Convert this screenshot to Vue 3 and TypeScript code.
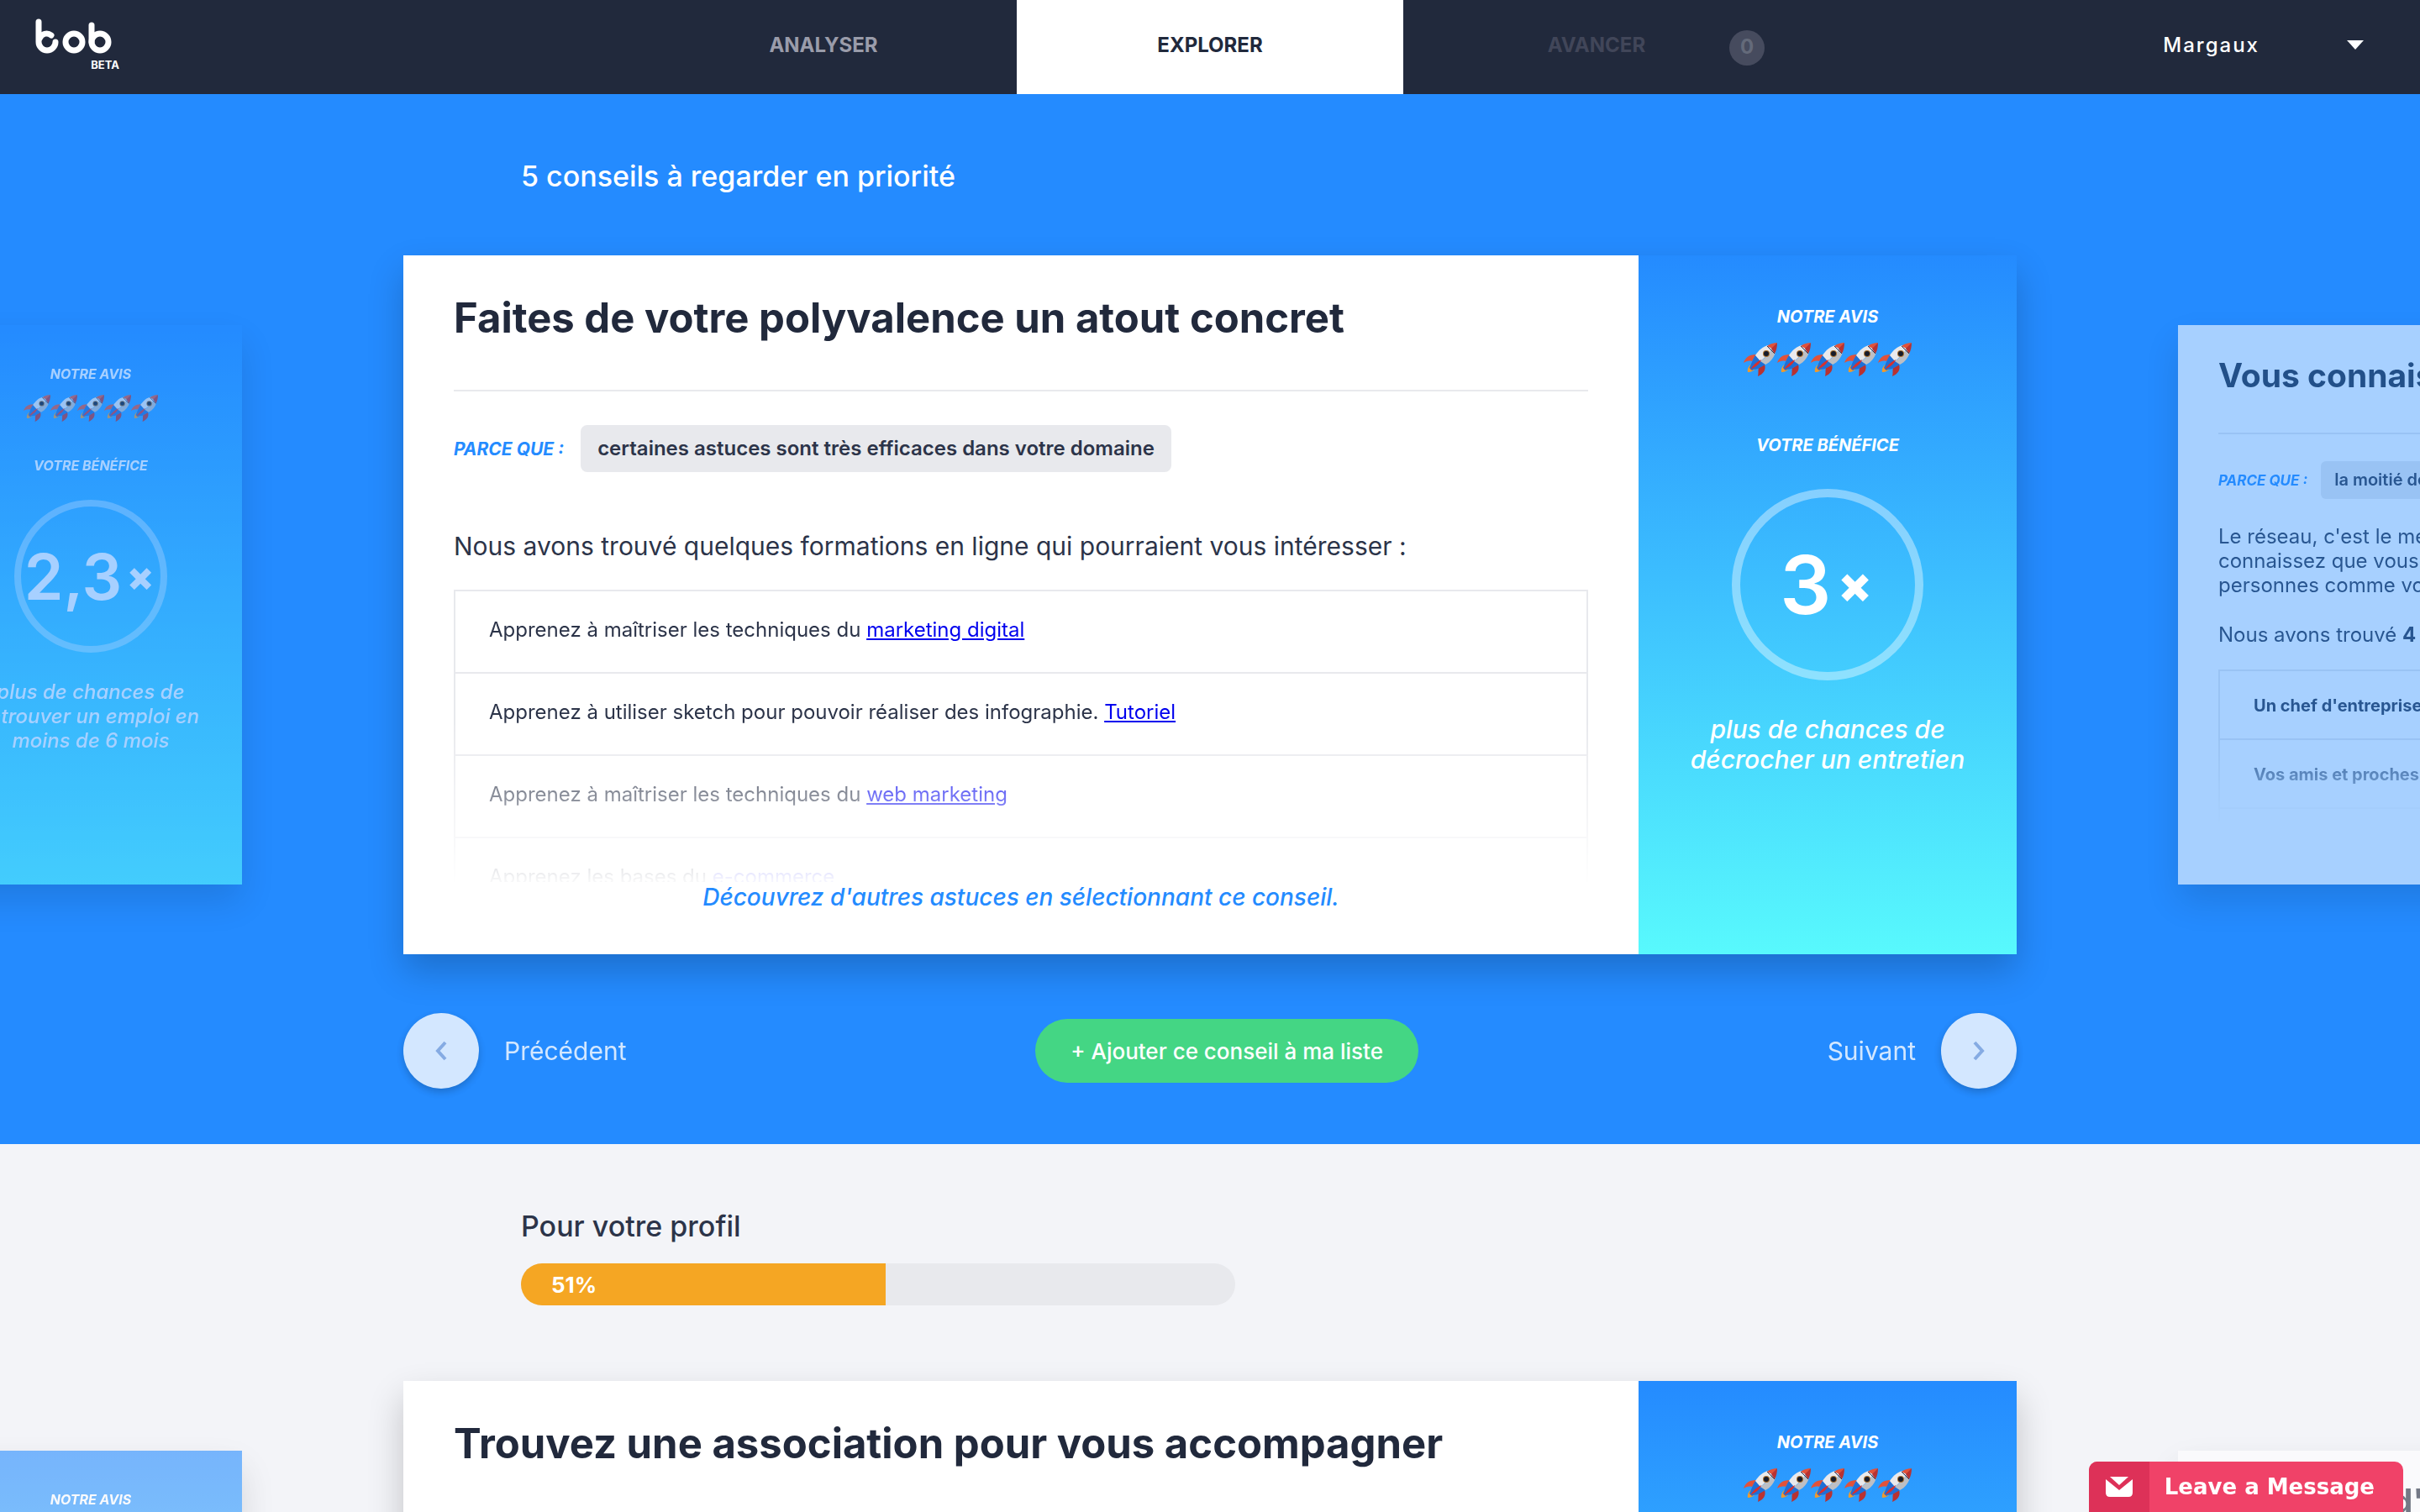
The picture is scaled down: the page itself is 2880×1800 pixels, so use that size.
<script setup lang="ts">
interface Advice {
  side?: 'left' | 'right'
  title?: string
  reason?: string
  benefit?: string
  outcome?: string[]
  intro?: string[]
  found?: { before: string; count: string; after: string }
  rows?: { text: string; link?: string; strong?: boolean }[]
  more?: string
}

const priority: Advice[] = [
  { side: 'left', benefit: '2,3', outcome: ['plus de chances de', 'retrouver un emploi en', 'moins de 6 mois'] },
  {
    title: 'Faites de votre polyvalence un atout concret',
    reason: 'certaines astuces sont très efficaces dans votre domaine',
    benefit: '3',
    outcome: ['plus de chances de', 'décrocher un entretien'],
    intro: ['Nous avons trouvé quelques formations en ligne qui pourraient vous intéresser :'],
    rows: [
      { text: 'Apprenez à maîtriser les techniques du ', link: 'marketing digital' },
      { text: 'Apprenez à utiliser sketch pour pouvoir réaliser des infographie. ', link: 'Tutoriel' },
      { text: 'Apprenez à maîtriser les techniques du ', link: 'web marketing' },
      { text: 'Apprenez les bases du ', link: 'e-commerce' },
    ],
    more: "Découvrez d'autres astuces en sélectionnant ce conseil.",
  },
  {
    side: 'right',
    title: 'Vous connaissez du monde',
    reason: 'la moitié des emplois se trouvent par contact',
    intro: ["Le réseau, c'est le meilleur moyen", 'connaissez que vous cherchez', 'personnes comme vous'],
    found: { before: 'Nous avons trouvé ', count: '4', after: ' contacts' },
    rows: [
      { text: "Un chef d'entreprise", strong: true },
      { text: 'Vos amis et proches', strong: true },
      { text: '' },
    ],
    more: "Découvrez d'autres astuces en sélectionnant ce conseil.",
  },
]

const profile: Advice[] = [
  { side: 'left' },
  { title: 'Trouvez une association pour vous accompagner' },
  { side: 'right', title: "Demander d'autres avis" },
]

const sections = [
  { key: 'priority', cards: priority },
  { key: 'profile', cards: profile },
]
const progress = 51
</script>

<template>
  <div class="page">
    <svg class="defs" aria-hidden="true">
      <symbol id="rocket" viewBox="0 0 40 40">
        <path d="M0 24C2 18 6 14 15 14L10 22C6 21 3 22 0 24Z" fill="#e1523a" />
        <path d="M17 40C18 36 17 33 18 30L25 26C27 32 24 37 17 40Z" fill="#b83232" />
        <path d="M5 35C4 30 7 27 10 25L15 29C13 33 9 35 5 35Z" fill="#f09a2c" />
        <path d="M14 15L20 21L26 26L17 31C14 32 12 31 10 33L7 30C9 26 11 19 14 15Z" fill="#1f6fd6" />
        <path d="M14 15C18 9 23 4 30 3L34 8C30 13 25 18 20 22Z" fill="#e9e9ec" />
        <path d="M34 8L38 11C36 18 32 23 26 26L20 22C26 18 30 13 34 8Z" fill="#bdbfc4" />
        <path d="M28 4C32 1 36 0 40 0L34 7Z" fill="#e1523a" />
        <path d="M40 0C40 5 39 9 37 13L33 7Z" fill="#b83232" />
        <path d="M28 4L37 13" fill="none" stroke="#2a3350" stroke-width="1" />
        <path d="M8 32C11 27 15 23 21 20C20 25 14 29 8 32Z" fill="#d6302f" />
        <circle cx="27" cy="13" r="4" fill="#a8712f" />
        <circle cx="27" cy="13" r="3" fill="#171b2a" />
      </symbol>
    </svg>

    <header class="topbar">
      <a class="brand" href="#" aria-label="bob beta">
        <svg class="logo" viewBox="0 0 92 42" aria-hidden="true">
          <g fill="none" stroke="#fff" stroke-width="7" stroke-linecap="round">
            <path d="M4 4V28A10 10 0 0 0 24 28" />
            <path d="M5 24C8 18 14 16 19 20" />
            <circle cx="46" cy="28" r="10" />
            <circle cx="77" cy="28" r="10" />
            <path d="M67 8V28" />
          </g>
        </svg>
        <span class="beta">BETA</span>
      </a>
      <nav class="tabs">
        <a class="tab" href="#">ANALYSER</a>
        <a class="tab active" href="#">EXPLORER</a>
        <a class="tab disabled" href="#">AVANCER<span class="count">0</span></a>
      </nav>
      <button class="user" type="button">
        Margaux
        <svg class="caret" viewBox="0 0 20 11" aria-hidden="true"><path d="M0 0H20L10 11Z" fill="#fff" /></svg>
      </button>
    </header>

    <section v-for="s in sections" :key="s.key" :class="['band', s.key]">
      <h2 v-if="s.key === 'priority'" class="band-title">5 conseils à regarder en priorité</h2>
      <div v-else class="profile-head">
        <h2 class="band-title">Pour votre profil</h2>
        <div class="meter" role="progressbar" :aria-valuenow="progress" aria-valuemin="0" aria-valuemax="100">
          <div class="fill" :style="{ width: progress + '%' }">{{ progress }}%</div>
        </div>
      </div>

      <div class="carousel">
        <article v-for="(c, i) in s.cards" :key="i" :class="['card', { side: c.side }]">
          <div class="body">
            <h3 v-if="c.title" class="title">{{ c.title }}</h3>
            <div v-if="c.reason" class="reason">
              <span class="because">PARCE QUE :</span>
              <span class="chip">{{ c.reason }}</span>
            </div>
            <p v-if="c.intro" class="intro">
              <span v-for="line in c.intro" :key="line" class="line">{{ line }}</span>
            </p>
            <p v-if="c.found" class="found">{{ c.found.before }}<b>{{ c.found.count }}</b>{{ c.found.after }}</p>
            <ul v-if="c.rows" class="rows">
              <li v-for="(r, j) in c.rows" :key="j" :class="['row', { strong: r.strong }]">
                <span>{{ r.text }}<a v-if="r.link" href="#">{{ r.link }}</a></span>
              </li>
            </ul>
            <p v-if="c.more" class="more">{{ c.more }}</p>
          </div>
          <aside class="panel">
            <div class="label">NOTRE AVIS</div>
            <div class="rockets">
              <svg v-for="n in 5" :key="n" class="rocket" aria-hidden="true"><use href="#rocket" /></svg>
            </div>
            <template v-if="c.benefit">
              <div class="label benefit">VOTRE BÉNÉFICE</div>
              <div class="ring"><span class="number">{{ c.benefit }}</span><span class="times">×</span></div>
              <p class="outcome">
                <span v-for="line in c.outcome" :key="line" class="line">{{ line }}</span>
              </p>
            </template>
          </aside>
        </article>
      </div>

      <div v-if="s.key === 'priority'" class="controls">
        <button class="step" type="button">
          <span class="disc">
            <svg viewBox="0 0 16 24" aria-hidden="true"><path d="M13 2L4 12L13 22" /></svg>
          </span>
          Précédent
        </button>
        <button class="add" type="button">+ Ajouter ce conseil à ma liste</button>
        <button class="step" type="button">
          Suivant
          <span class="disc">
            <svg viewBox="0 0 16 24" aria-hidden="true"><path d="M3 2L12 12L3 22" /></svg>
          </span>
        </button>
      </div>
    </section>

    <button class="chat" type="button">
      <span class="chat-icon">
        <svg viewBox="0 0 32 24" aria-hidden="true">
          <path d="M5 0H27L16 10Z" fill="#fff" />
          <path d="M0 3L16 16L32 3V19Q32 24 27 24H5Q0 24 0 19Z" fill="#fff" />
        </svg>
      </span>
      <span class="chat-text">Leave a Message</span>
    </button>
  </div>
</template>

<style>
body {
  margin: 0;
}
</style>

<style scoped>
* {
  box-sizing: border-box;
}
.page {
  height: 100vh;
  overflow: hidden;
  background: #f3f4f8;
  color: #2c3449;
  font-family: Inter, "Open Sans", sans-serif;
}
button {
  border: 0;
  font: inherit;
  cursor: pointer;
}
h2,
h3,
p,
ul {
  margin: 0;
  padding: 0;
}
.defs {
  position: absolute;
  width: 0;
  height: 0;
}
.line {
  display: block;
  white-space: nowrap;
}

.topbar {
  display: grid;
  grid-template-columns: 1fr auto 1fr;
  height: 112px;
  background: #21293c;
  color: #fff;
}
.brand {
  display: flex;
  flex-direction: column;
  align-items: flex-start;
  width: 142px;
  padding: 22px 0 0 42px;
  color: #fff;
  text-decoration: none;
}
.logo {
  width: 92px;
  height: 42px;
}
.beta {
  align-self: flex-end;
  margin-top: 4px;
  font-size: 13px;
  line-height: 18px;
  font-weight: 700;
}
.tabs {
  display: flex;
}
.tab {
  display: flex;
  justify-content: center;
  position: relative;
  width: 460px;
  padding-top: 39px;
  color: #9a9caa;
  font-size: 24px;
  line-height: 30px;
  font-weight: 700;
  text-decoration: none;
}
.tab.active {
  background: #fff;
  color: #21293c;
}
.tab.disabled {
  color: #414659;
}
.count {
  position: absolute;
  top: 36px;
  right: 30px;
  width: 42px;
  height: 42px;
  border-radius: 50%;
  background: #464b5e;
  color: #646a7a;
  line-height: 40px;
  text-align: center;
}
.user {
  display: flex;
  align-items: center;
  justify-self: end;
  gap: 104px;
  padding: 0 67px 6px 0;
  background: none;
  color: #fff;
  font-size: 24px;
  font-weight: 500;
  letter-spacing: 2px;
}
.caret {
  width: 20px;
  height: 11px;
}

.band.priority {
  padding-bottom: 66px;
  background: #248bff;
}
.band-title {
  padding: 76px 0 0 620px;
  font-size: 34px;
  line-height: 44px;
  font-weight: 500;
}
.priority .band-title {
  color: #fff;
}
.profile-head {
  width: 1470px;
}
.meter {
  margin: 22px 0 0 620px;
  height: 50px;
  overflow: hidden;
  border-radius: 25px;
  background: #e8e9ed;
}
.fill {
  height: 100%;
  padding-left: 36px;
  background: #f5a623;
  color: #fff;
  font-size: 26px;
  line-height: 52px;
  font-weight: 700;
}

.carousel {
  display: flex;
  align-items: center;
  justify-content: center;
  gap: calc(100% / 15);
  margin-top: 72px;
}
.profile .carousel {
  margin-top: 90px;
}
.card {
  display: flex;
  flex: none;
  width: calc(100% * 2 / 3);
  min-height: 832px;
  background: #fff;
  box-shadow: 0 20px 40px rgba(0, 0, 0, 0.2);
}
.card.side {
  width: calc(100% * 8 / 15);
  min-height: 666px;
  opacity: 0.6;
}
.body {
  flex: 1;
  min-width: 0;
  padding: 45px 60px 0;
}
.title {
  padding-bottom: 55px;
  border-bottom: 2px solid #e8e9ed;
  color: #21293c;
  font-size: 49px;
  line-height: 60px;
  font-weight: 700;
  white-space: nowrap;
}
.reason {
  display: flex;
  align-items: center;
  gap: 20px;
  margin-top: 40px;
  white-space: nowrap;
}
.because {
  color: #248bff;
  font-size: 21px;
  font-style: italic;
  font-weight: 700;
}
.chip {
  padding: 0 20px;
  border-radius: 8px;
  background: #e8e9ed;
  font-size: 24px;
  line-height: 56px;
  font-weight: 600;
}
.intro {
  margin-top: 68px;
  font-size: 30px;
  line-height: 40px;
}
.rows {
  height: 348px;
  margin-top: 32px;
  overflow: hidden;
  border: 2px solid #e8e9ed;
  border-width: 2px 2px 0;
  list-style: none;
  -webkit-mask-image: linear-gradient(#000 45%, transparent 102%);
  mask-image: linear-gradient(#000 45%, transparent 102%);
}
.row {
  height: 98px;
  padding-left: 40px;
  border-bottom: 2px solid #e8e9ed;
  font-size: 24px;
  line-height: 92px;
  white-space: nowrap;
}
.row.strong {
  font-weight: 700;
}
.row a {
  color: #0000ee;
}
.more {
  color: #248bff;
  font-size: 28px;
  line-height: 36px;
  font-style: italic;
  font-weight: 500;
  text-align: center;
  white-space: nowrap;
}
.panel {
  display: flex;
  flex: none;
  flex-direction: column;
  align-items: center;
  width: 450px;
  padding-top: 59px;
  background: linear-gradient(#248bff, #58f9fd);
  color: #fff;
}
.label {
  font-size: 20px;
  line-height: 28px;
  font-style: italic;
  font-weight: 700;
}
.rockets {
  display: flex;
  margin-top: 17px;
}
.rocket {
  width: 40px;
  height: 40px;
}
.benefit {
  margin-top: 68px;
}
.ring {
  display: flex;
  align-items: center;
  justify-content: center;
  gap: 8px;
  width: 228px;
  height: 228px;
  margin-top: 38px;
  padding-right: 4px;
  border: 10px solid rgba(255, 255, 255, 0.4);
  border-radius: 50%;
  font-weight: 600;
}
.number {
  font-size: 96px;
}
.times {
  font-size: 58px;
  font-weight: 900;
}
.outcome {
  margin-top: 40px;
  font-size: 30px;
  line-height: 36px;
  font-style: italic;
  font-weight: 500;
  text-align: center;
}

.side .body {
  padding: 36px 48px 0;
}
.side .title {
  padding-bottom: 44px;
  font-size: 39px;
  line-height: 48px;
}
.side .reason {
  gap: 16px;
  margin-top: 32px;
}
.side .because {
  font-size: 17px;
}
.side .label {
  font-size: 16px;
  line-height: 22px;
}
.side .chip {
  padding: 0 16px;
  border-radius: 6px;
  font-size: 20px;
  line-height: 45px;
}
.side .intro,
.found {
  margin-top: 30px;
  font-size: 24px;
  line-height: 29px;
}
.side .rows {
  height: 184px;
  margin-top: 27px;
}
.side .row {
  height: 82px;
  font-size: 20px;
  line-height: 82px;
}
.side .more {
  font-size: 22px;
  line-height: 29px;
}
.side .panel {
  width: 360px;
  padding-top: 47px;
}
.side .rockets {
  margin-top: 14px;
}
.side .rocket {
  width: 32px;
  height: 32px;
}
.side .benefit {
  margin-top: 41px;
}
.side .ring {
  gap: 6px;
  width: 182px;
  height: 182px;
  margin-top: 30px;
  border-width: 8px;
}
.side .number {
  font-size: 75px;
}
.side .times {
  font-size: 46px;
}
.side .outcome {
  margin-top: 32px;
  font-size: 24px;
  line-height: 29px;
}

.controls {
  display: flex;
  align-items: center;
  justify-content: space-between;
  width: calc(100% * 2 / 3);
  margin: 70px auto 0;
}
.step {
  display: flex;
  align-items: center;
  gap: 30px;
  padding: 0;
  background: none;
  color: #fff;
  font-size: 30px;
  opacity: 0.8;
}
.disc {
  display: flex;
  align-items: center;
  justify-content: center;
  width: 90px;
  height: 90px;
  border-radius: 50%;
  background: #fff;
  box-shadow: 0 4px 10px rgba(0, 0, 0, 0.25);
}
.disc svg {
  width: 16px;
  height: 24px;
  fill: none;
  stroke: #9eb3dd;
  stroke-width: 4;
}
.add {
  height: 76px;
  padding: 0 42px;
  border-radius: 38px;
  background: #44d684;
  color: #fff;
  font-size: 26px;
  font-weight: 500;
}

.chat {
  display: flex;
  position: fixed;
  right: 20px;
  bottom: 0;
  height: 60px;
  padding: 0;
  overflow: hidden;
  border-radius: 10px 10px 0 0;
  background: #f04268;
  color: #fff;
}
.chat-icon {
  display: flex;
  align-items: center;
  justify-content: center;
  width: 72px;
  height: 60px;
  background: #dd3158;
}
.chat-icon svg {
  width: 32px;
  height: 24px;
}
.chat-text {
  padding: 0 34px 0 18px;
  font-family: "DejaVu Sans", sans-serif;
  font-size: 26px;
  line-height: 60px;
  font-weight: 700;
}
</style>
